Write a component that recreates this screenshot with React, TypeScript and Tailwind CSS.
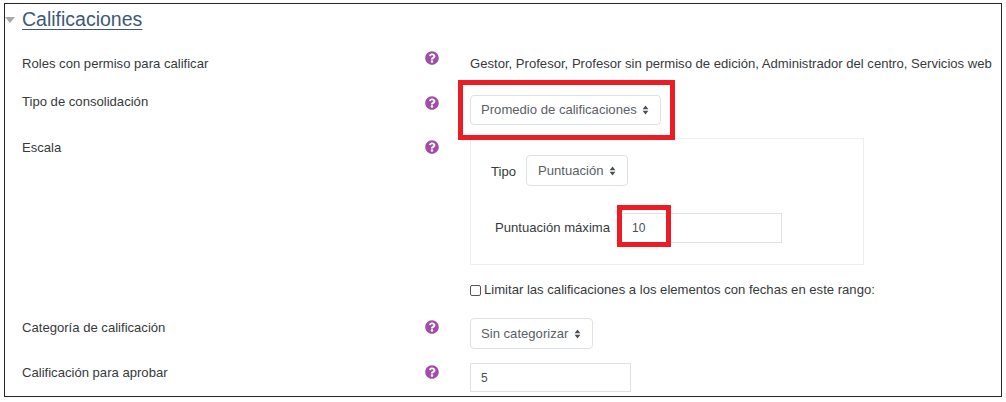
const font = { fontFamily: '"Liberation Sans", Arial, sans-serif' };

function HelpIcon() {
  return (
    <svg viewBox="0 0 512 512" className="h-[14px] w-[14px]" fill="#a04ca8">
      <path d="M504 256c0 137-111 248-248 248S8 393 8 256 119 8 256 8s248 111 248 248zM263 90c-54 0-89 23-116 63-4 5-3 12 2 16l35 26c5 4 13 3 17-2 18-23 30-36 58-36 21 0 46 13 46 33 0 15-12 23-33 34-23 13-54 30-54 71v6c0 7 5 12 12 12h56c7 0 12-5 12-12v-2c0-28 83-30 83-106 0-58-60-102-118-102zm-7 246c-25 0-46 21-46 46s21 46 46 46 46-21 46-46-21-46-46-46z" />
    </svg>
  );
}

function SortCaret() {
  return (
    <svg viewBox="0 0 8 12" className="h-[10px] w-[7px] text-[#495057]" fill="currentColor">
      <path d="M4 0.5 7.5 5H0.5zM4 11.5 0.5 7h7z" />
    </svg>
  );
}

function Select({ label, className }: { label: string; className: string }) {
  return (
    <div className={`flex items-center justify-between rounded-[4px] border border-[#dee2e6] bg-white pr-[11px] text-[13.1px] text-[#5a6067] ${className}`}>
      <span>{label}</span>
      <SortCaret />
    </div>
  );
}

function Row({ label, height, children, labelTop = 0, iconTop = 0 }: { label: string; height: string; children?: React.ReactNode; labelTop?: number; iconTop?: number }) {
  return (
    <div className={`flex ${height}`}>
      <div className="w-[418px] shrink-0 pl-[17px] text-[13.1px] leading-[16px] text-[#373a3c]" style={{ paddingTop: labelTop }}>
        {label}
      </div>
      <div className="w-[47px] shrink-0 pl-[2px]" style={{ paddingTop: iconTop }}>
        <HelpIcon />
      </div>
      <div className="min-w-0 flex-1">{children}</div>
    </div>
  );
}

export default function App() {
  return (
    <div className="h-[402px] w-[1006px] overflow-hidden bg-white pl-[4px] pt-[3px]" style={font}>
      <div className="h-[394px] w-[998px] border border-[#262626] bg-white">
        <div className="flex h-[36px] items-start pt-[3px]">
          <svg viewBox="0 0 10 6" className="mr-[7px] mt-[10px] h-[6px] w-[10px]" fill="#a8a8a8">
            <path d="M0 0h10L5 6z" />
          </svg>
          <h2 className="text-[19.5px] leading-[24px] text-[#3c5a78] underline decoration-1 underline-offset-[3px]">Calificaciones</h2>
        </div>

        <Row label="Roles con permiso para calificar" height="h-[40px]" labelTop={16} iconTop={11}>
          <p className="pt-[16px] text-[13.1px] leading-[16px] whitespace-nowrap text-[#373a3c]">
            Gestor, Profesor, Profesor sin permiso de edición, Administrador del centro, Servicios web
          </p>
        </Row>

        <Row label="Tipo de consolidación" height="h-[44px]" labelTop={14} iconTop={16}>
          <div className="relative mt-[15px] w-fit">
            <Select label="Promedio de calificaciones" className="h-[30px] w-[191px] pl-[10px]" />
            <div className="pointer-events-none absolute -bottom-[15px] -left-[12px] -right-[14px] -top-[15px] border-[5px] border-[#ed1c24]" />
          </div>
        </Row>

        <Row label="Escala" height="h-[190px]" labelTop={16} iconTop={16}>
          <div className="mt-[14px] h-[127px] w-[394px] border border-[#eceef0] pl-[20px] pt-[16px]">
            <div className="flex items-center gap-[10px]">
              <span className="pt-[2px] text-[13.1px] text-[#373a3c]">Tipo</span>
              <Select label="Puntuación" className="h-[31px] w-[102px] pl-[11px]" />
            </div>
            <div className="mt-[27px] flex items-center gap-[8px] pl-[4px]">
              <span className="text-[13.1px] text-[#373a3c]">Puntuación máxima</span>
              <div className="relative flex h-[30px] w-[164px] items-center border border-[#dee2e6] pl-[13px] text-[12px] text-[#495057]">
                10
                <div className="pointer-events-none absolute -bottom-[5px] -left-[2px] -top-[9px] w-[54px] border-[5px] border-[#ed1c24]" />
              </div>
            </div>
          </div>
          <label className="mt-[17px] flex items-center gap-[3px] text-[13.1px] leading-[16px] text-[#373a3c]">
            <span className="h-[11px] w-[11px] rounded-[2px] border border-[#555]" />
            Limitar las calificaciones a los elementos con fechas en este rango:
          </label>
        </Row>

        <Row label="Categoría de calificación" height="h-[44px]" labelTop={6} iconTop={6}>
          <Select label="Sin categorizar" className="mt-[4px] h-[31px] w-[123px] pl-[10px]" />
        </Row>

        <Row label="Calificación para aprobar" height="h-[34px]" labelTop={7} iconTop={7}>
          <div className="mt-[5px] flex h-[29px] w-[161px] items-center border border-[#dee2e6] pl-[10px] text-[12px] text-[#495057]">5</div>
        </Row>
      </div>
    </div>
  );
}
